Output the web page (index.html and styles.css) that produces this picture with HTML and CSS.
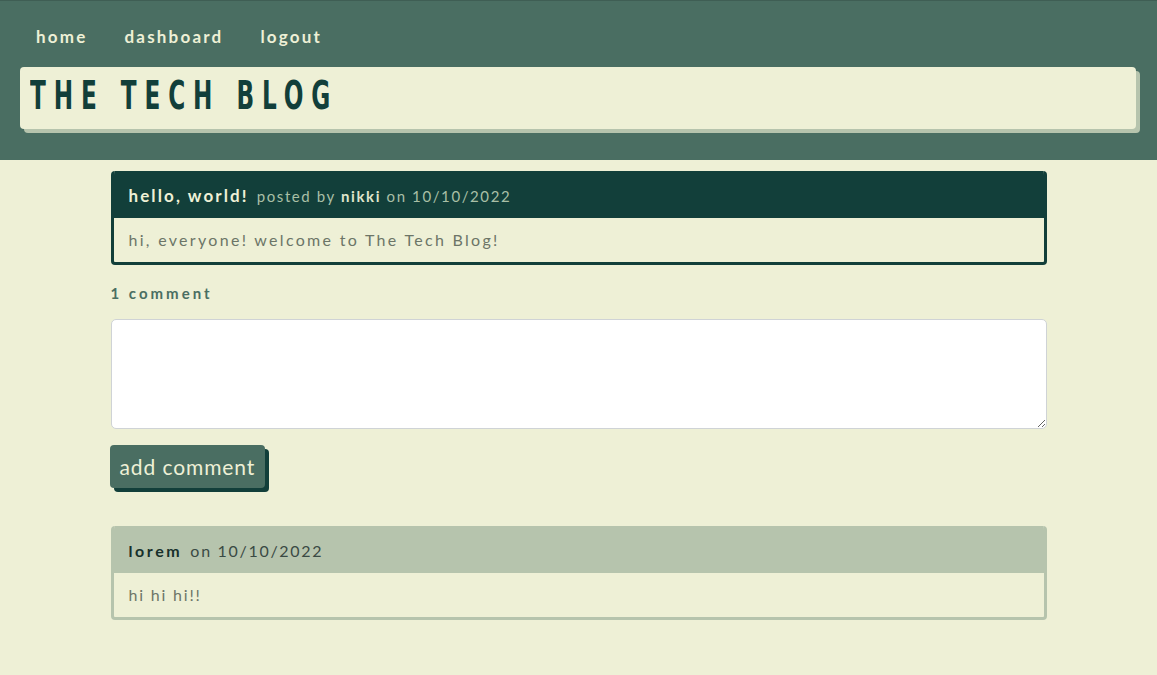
FILE: index.html
```html
<!DOCTYPE html>
<html lang="en">
<head>
<meta charset="utf-8">
<title>The Tech Blog</title>
<link rel="stylesheet" href="styles.css">
</head>
<body>
<header class="site-header">
  <nav class="nav">
    <a class="nav-link" href="#">home</a>
    <a class="nav-link" href="#">dashboard</a>
    <a class="nav-link" href="#">logout</a>
  </nav>
  <div class="title-box">
    <h1 class="site-title">The Tech Blog</h1>
  </div>
</header>
<main class="content">
  <article class="card card-post">
    <div class="card-head">
      <span class="post-title">hello, world!</span>
      <span class="meta">posted by <b class="author">nikki</b> on 10/10/2022</span>
    </div>
    <div class="card-body">hi, everyone! welcome to The Tech Blog!</div>
  </article>
  <p class="comment-count">1 comment</p>
  <form class="comment-form">
    <textarea class="comment-input"></textarea>
    <button type="button" class="btn">add comment</button>
  </form>
  <article class="card card-comment">
    <div class="card-head">
      <b class="author">lorem</b> <span class="meta">on 10/10/2022</span>
    </div>
    <div class="card-body">hi hi hi!!</div>
  </article>
</main>
</body>
</html>
```
FILE: styles.css
```css
* { box-sizing: border-box; }
html, body { margin: 0; padding: 0; }
body {
  background: #eef0d6;
  font-family: "Lato", "Open Sans", sans-serif;
  color: #5f6f66;
  min-height: 675px;
}
.site-header {
  background: #4a6e62;
  border-top: 1px solid #3f5e54;
  padding: 23px 21px 31px 20px;
}
.nav {
  display: flex;
  gap: 37px;
  padding-left: 16px;
  height: 24px;
  align-items: center;
}
.nav-link {
  color: #eef0d6;
  text-decoration: none;
  font-weight: 700;
  font-size: 17px;
  letter-spacing: 2.2px;
}
.title-box {
  margin-top: 19px;
  background: #eef0d6;
  border-radius: 4px;
  box-shadow: 4px 4px 0 #b6c4ad;
  height: 62px;
  display: flex;
  align-items: center;
  padding-left: 10px;
  padding-bottom: 6px;
}
.site-title {
  margin: 0;
  font-family: "DejaVu Sans Condensed", "DejaVu Sans", sans-serif;
  font-weight: 700;
  font-size: 39px;
  text-transform: uppercase;
  letter-spacing: 12px;
  color: #123f3a;
  transform: scaleX(0.66);
  transform-origin: left center;
  line-height: 1;
}
.content {
  width: 936px;
  margin: 11px auto 0;
}
.card {
  border-radius: 4px;
  overflow: hidden;
  border: 3px solid #123f3a;
  border-top: 0;
}
.card-head {
  height: 47px;
  display: flex;
  align-items: center;
  padding: 0 15px;
  gap: 8px;
  font-size: 16px;
  letter-spacing: 1.5px;
}
.card-body {
  height: 44px;
  display: flex;
  align-items: center;
  padding: 0 15px 2px;
  font-size: 16px;
  letter-spacing: 2.3px;
  color: #6c7567;
}
.card-post .card-head {
  background: #123f3a;
  margin: 0 -3px;
  padding-left: 18px;
  padding-top: 2px;
}
.post-title {
  font-weight: 700;
  font-size: 17px;
  color: #eef0d6;
  letter-spacing: 2.1px;
}
.card-post .meta {
  color: #a9bfa6;
  font-size: 15px;
  letter-spacing: 1.6px;
}
.card-post .author { color: #dfe5cc; }
.comment-count {
  margin: 19px 0 0;
  font-size: 15px;
  font-weight: 700;
  letter-spacing: 3px;
  color: #4a6e62;
  line-height: 18px;
}
.comment-form {
  display: flex;
  flex-direction: column;
  align-items: flex-start;
}
.comment-input {
  margin-top: 17px;
  width: 100%;
  height: 110px;
  background: #fff;
  border: 1px solid #cfd3d6;
  border-radius: 5px;
  font-family: inherit;
}
.btn {
  margin-top: 16px;
  margin-left: -1px;
  background: #4a6e62;
  color: #eef0d6;
  border: 0;
  border-radius: 4px;
  box-shadow: 4px 4px 0 #123f3a;
  font-family: inherit;
  font-size: 21px;
  letter-spacing: 0.9px;
  height: 43px;
  padding: 0 10px;
}
.card-comment {
  margin-top: 38px;
  border-color: #b6c4ad;
}
.card-comment .card-head {
  background: #b6c4ad;
  margin: 0 -3px;
  padding-left: 18px;
  padding-top: 2px;
  color: #2d3b35;
  gap: 8px;
}
.card-comment .card-body { letter-spacing: 1.8px; }
.card-comment .author {
  color: #17302b;
  letter-spacing: 2.6px;
}
.card-comment .meta {
  color: #3a4a44;
  letter-spacing: 1.7px;
}
```
